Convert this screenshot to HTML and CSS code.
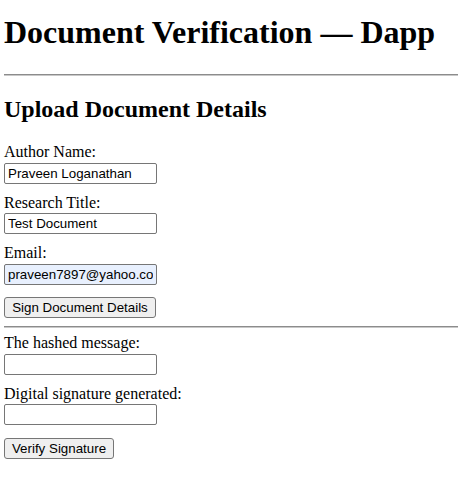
FILE: index.html
```html
<!DOCTYPE html>
<html>
<head>
<meta charset="utf-8">
<title>Document Verification — Dapp</title>
<link rel="stylesheet" href="styles.css">
</head>
<body>
<h1 class="title">Document Verification — Dapp</h1>
<hr class="rule rule-top">
<h2 class="subtitle">Upload Document Details</h2>
<div class="field">
  <label class="label">Author Name:</label>
  <input class="input" type="text" value="Praveen Loganathan">
</div>
<div class="field">
  <label class="label">Research Title:</label>
  <input class="input" type="text" value="Test Document">
</div>
<div class="field">
  <label class="label">Email:</label>
  <input class="input input-auto" type="text" value="praveen7897@yahoo.com">
</div>
<button class="btn btn-sign">Sign Document Details</button>
<hr class="rule rule-mid">
<div class="field">
  <label class="label">The hashed message:</label>
  <input class="input" type="text">
</div>
<div class="field">
  <label class="label">Digital signature generated:</label>
  <input class="input" type="text">
</div>
<button class="btn btn-verify">Verify Signature</button>
</body>
</html>
```
FILE: styles.css
```css
html, body {
  margin: 0;
  padding: 0;
  background: #fff;
}
body {
  padding-left: 4px;
  font-family: "Liberation Serif", "Times New Roman", serif;
  font-size: 16px;
  color: #000;
}
.title {
  font-size: 32px;
  font-weight: bold;
  line-height: 37px;
  margin: 14px 0 23px;
}
.rule {
  border: 0;
  border-top: 1px solid #8c8c8c;
  border-bottom: 1px solid #c8c8c8;
  height: 0;
  margin: 0;
}
.rule-mid {
  margin: 8px 0 6px;
}
.subtitle {
  font-size: 24px;
  font-weight: bold;
  line-height: 28px;
  margin: 19px 0 20px;
}
.field {
  display: flex;
  flex-direction: column;
  align-items: flex-start;
  margin-bottom: 10px;
}
.label {
  line-height: 18px;
}
.input {
  margin-top: 1.5px;
  box-sizing: border-box;
  width: 153px;
  height: 21px;
  padding: 0 3px;
  border: 1px solid #767676;
  border-radius: 2px;
  background: #fff;
  font-family: "Liberation Sans", Arial, sans-serif;
  font-size: 13.33px;
  color: #000;
}
.input-auto {
  background: #e8f0fe;
}
.btn {
  display: block;
  box-sizing: border-box;
  height: 21px;
  margin-top: 12.5px;
  padding: 0 6px;
  border: 1px solid #767676;
  border-radius: 3px;
  background: #efefef;
  font-family: "Liberation Sans", Arial, sans-serif;
  font-size: 13.33px;
  color: #000;
}
.btn-sign {
  width: 152px;
}
.btn-verify {
  width: 110px;
}
```
